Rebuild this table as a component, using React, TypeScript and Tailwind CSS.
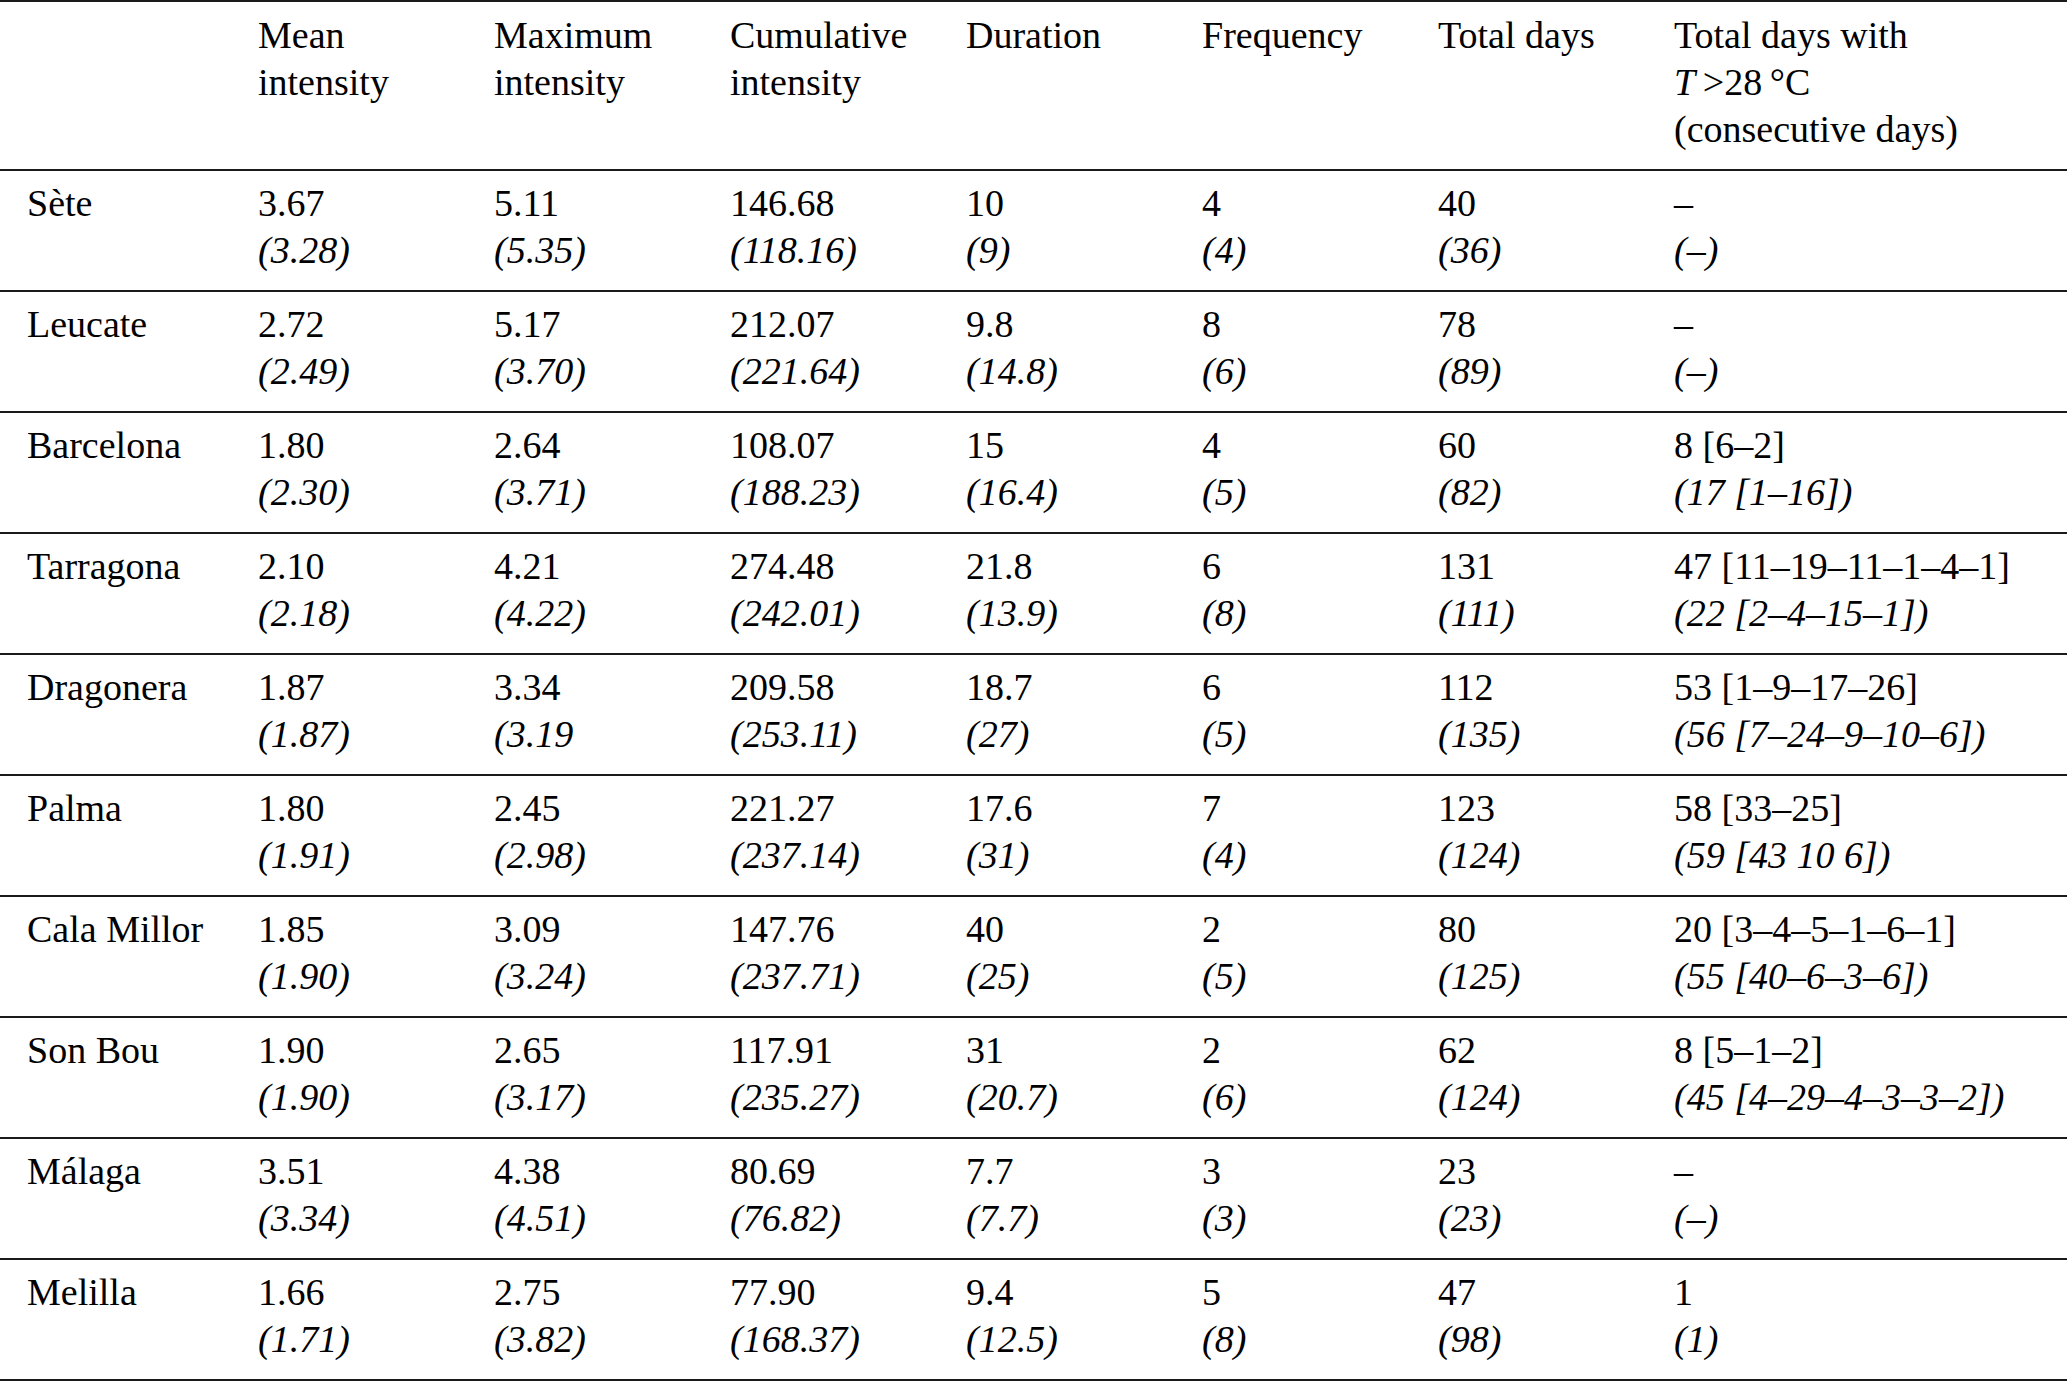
const headers = [
  ["Mean", "intensity"],
  ["Maximum", "intensity"],
  ["Cumulative", "intensity"],
  ["Duration"],
  ["Frequency"],
  ["Total days"],
];

type Row = { site: string; values: [string, string][] };

const rows: Row[] = [
  { site: "Sète", values: [["3.67", "(3.28)"], ["5.11", "(5.35)"], ["146.68", "(118.16)"], ["10", "(9)"], ["4", "(4)"], ["40", "(36)"], ["–", "(–)"]] },
  { site: "Leucate", values: [["2.72", "(2.49)"], ["5.17", "(3.70)"], ["212.07", "(221.64)"], ["9.8", "(14.8)"], ["8", "(6)"], ["78", "(89)"], ["–", "(–)"]] },
  { site: "Barcelona", values: [["1.80", "(2.30)"], ["2.64", "(3.71)"], ["108.07", "(188.23)"], ["15", "(16.4)"], ["4", "(5)"], ["60", "(82)"], ["8 [6–2]", "(17 [1–16])"]] },
  { site: "Tarragona", values: [["2.10", "(2.18)"], ["4.21", "(4.22)"], ["274.48", "(242.01)"], ["21.8", "(13.9)"], ["6", "(8)"], ["131", "(111)"], ["47 [11–19–11–1–4–1]", "(22 [2–4–15–1])"]] },
  { site: "Dragonera", values: [["1.87", "(1.87)"], ["3.34", "(3.19"], ["209.58", "(253.11)"], ["18.7", "(27)"], ["6", "(5)"], ["112", "(135)"], ["53 [1–9–17–26]", "(56 [7–24–9–10–6])"]] },
  { site: "Palma", values: [["1.80", "(1.91)"], ["2.45", "(2.98)"], ["221.27", "(237.14)"], ["17.6", "(31)"], ["7", "(4)"], ["123", "(124)"], ["58 [33–25]", "(59 [43 10 6])"]] },
  { site: "Cala Millor", values: [["1.85", "(1.90)"], ["3.09", "(3.24)"], ["147.76", "(237.71)"], ["40", "(25)"], ["2", "(5)"], ["80", "(125)"], ["20 [3–4–5–1–6–1]", "(55 [40–6–3–6])"]] },
  { site: "Son Bou", values: [["1.90", "(1.90)"], ["2.65", "(3.17)"], ["117.91", "(235.27)"], ["31", "(20.7)"], ["2", "(6)"], ["62", "(124)"], ["8 [5–1–2]", "(45 [4–29–4–3–3–2])"]] },
  { site: "Málaga", values: [["3.51", "(3.34)"], ["4.38", "(4.51)"], ["80.69", "(76.82)"], ["7.7", "(7.7)"], ["3", "(3)"], ["23", "(23)"], ["–", "(–)"]] },
  { site: "Melilla", values: [["1.66", "(1.71)"], ["2.75", "(3.82)"], ["77.90", "(168.37)"], ["9.4", "(12.5)"], ["5", "(8)"], ["47", "(98)"], ["1", "(1)"]] },
];

const grid = "grid grid-cols-[231px_repeat(6,236px)_1fr] pl-[27px]";

export default function App() {
  return (
    <div
      className="w-[2067px] h-[1382px] bg-white text-black text-[38px] leading-[47px]"
      style={{ fontFamily: '"Liberation Serif", "Times New Roman", serif' }}
    >
      {/* Header */}
      <div className={`${grid} border-t-2 border-b-2 border-[#1a1a1a] pt-[10px] pb-[16px]`}>
        <div />
        {headers.map((lines, i) => (
          <div key={i} className="flex flex-col">
            {lines.map((l) => (
              <span key={l}>{l}</span>
            ))}
          </div>
        ))}
        <div className="flex flex-col whitespace-nowrap">
          <span>Total days with</span>
          <span>
            <i>T</i>
            {"\u2009>28\u2009°C"}
          </span>
          <span>(consecutive days)</span>
        </div>
      </div>

      {/* Body */}
      {rows.map((r) => (
        <div key={r.site} className={`${grid} border-b-2 border-[#1a1a1a] pt-[9px] pb-[16px]`}>
          <div>{r.site}</div>
          {r.values.map(([a, b], i) => (
            <div key={i} className="flex flex-col whitespace-nowrap">
              <span>{a}</span>
              <span className="italic">{b}</span>
            </div>
          ))}
        </div>
      ))}
    </div>
  );
}
